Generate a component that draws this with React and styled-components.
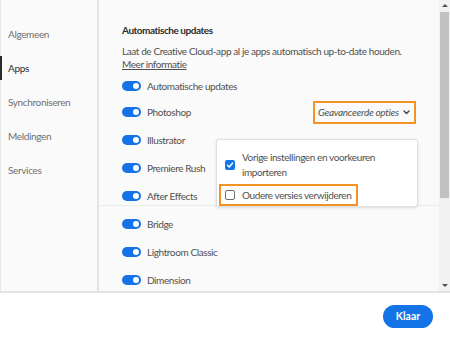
import React from 'react';
import styled, { createGlobalStyle } from 'styled-components';

const GlobalStyle = createGlobalStyle`
    body {
        margin: 0;
        background: #ffffff;
        font-family: Lato, "Open Sans", sans-serif;
    }
`;

const navItems = ['Algemeen', 'Apps', 'Synchroniseren', 'Meldingen', 'Services'];

const apps = [
    { name: 'Automatische updates', first: true },
    { name: 'Photoshop', advanced: true },
    { name: 'Illustrator' },
    { name: 'Premiere Rush' },
    { name: 'After Effects', last: true },
    { name: 'Bridge', afterDivider: true },
    { name: 'Lightroom Classic' },
    { name: 'Dimension' },
];

function Chevron() {
    return (
        <svg width="7" height="5" viewBox="0 0 7 5">
            <path d="M1 1l2.5 2.5L6 1" fill="none" stroke="#4b4b4b" strokeWidth="1.5" strokeLinecap="round" strokeLinejoin="round" />
        </svg>
    );
}

function Check() {
    return (
        <svg width="8" height="8" viewBox="0 0 8 8">
            <path d="M1.5 4.2l1.8 1.8L6.6 2" fill="none" stroke="#ffffff" strokeWidth="1.4" strokeLinecap="round" strokeLinejoin="round" />
        </svg>
    );
}

function App() {
    return (
        <Window>
            <GlobalStyle />
            <Body>
                <Sidebar>
                    {navItems.map((item) => (
                        <NavItem key={item} active={item === 'Apps'}>{item}</NavItem>
                    ))}
                </Sidebar>
                <Main>
                    <Content>
                        <Title>Automatische updates</Title>
                        <Description>
                            Laat de Creative Cloud-app al je apps automatisch up-to-date houden.
                            <br />
                            <MoreLink>Meer informatie</MoreLink>
                        </Description>
                        <List>
                            {apps.map((app) => (
                                <React.Fragment key={app.name}>
                                    {app.afterDivider && <Divider />}
                                    <Row first={app.first} last={app.last}>
                                        <Toggle><Knob /></Toggle>
                                        <Label>{app.name}</Label>
                                        {app.advanced && (
                                            <Advanced>
                                                <span>Geavanceerde opties</span>
                                                <Chevron />
                                            </Advanced>
                                        )}
                                    </Row>
                                </React.Fragment>
                            ))}
                        </List>
                        <Popover>
                            <Option>
                                <Box checked><Check /></Box>
                                <OptionText>Vorige instellingen en voorkeuren<br />importeren</OptionText>
                            </Option>
                            <Option highlighted>
                                <Box />
                                <OptionText>Oudere versies verwijderen</OptionText>
                            </Option>
                        </Popover>
                    </Content>
                    <Scrollbar>
                        <Arrow up />
                        <Track><Thumb /></Track>
                        <Arrow />
                    </Scrollbar>
                </Main>
            </Body>
            <Footer>
                <DoneButton>Klaar</DoneButton>
            </Footer>
        </Window>
    );
}

const Window = styled.div`
    width: 450px;
    height: 338px;
    display: flex;
    flex-direction: column;
    overflow: hidden;
`;

const Body = styled.div`
    height: 291px;
    display: flex;
    background: #fafafa;
    border-bottom: 2px solid #e3e3e3;
`;

const Sidebar = styled.nav`
    width: 96px;
    border-left: 1px solid #e8e8e8;
    border-right: 2px solid #e3e3e3;
    padding-top: 22px;
    display: flex;
    flex-direction: column;
    gap: 10px;
    box-sizing: content-box;
`;

const NavItem = styled.div`
    height: 24px;
    display: flex;
    align-items: center;
    margin-left: -1px;
    padding-left: 8px;
    font-size: 10px;
    letter-spacing: -0.35px;
    color: ${(p) => (p.active ? '#2c2c2c' : '#707070')};
    box-shadow: ${(p) => (p.active ? 'inset 2px 0 0 #2c2c2c' : 'none')};
`;

const Main = styled.div`
    flex: 1;
    display: flex;
`;

const Content = styled.div`
    flex: 1;
    position: relative;
    padding-top: 22px;
`;

const Title = styled.div`
    padding-left: 23px;
    font-size: 10px;
    font-weight: 700;
    letter-spacing: -0.45px;
    line-height: 16px;
    color: #2c2c2c;
`;

const Description = styled.div`
    margin-top: 7px;
    padding-left: 23px;
    font-size: 10px;
    letter-spacing: -0.4px;
    line-height: 13px;
    color: #505050;
`;

const MoreLink = styled.span`
    text-decoration: underline;
`;

const List = styled.div`
    margin-top: 3px;
    display: flex;
    flex-direction: column;
`;

const Row = styled.div`
    height: ${(p) => (p.first ? 24 : p.last ? 23 : 28)}px;
    padding: ${(p) => (p.last ? '4px 0 0' : '0')} 23px;
    box-sizing: border-box;
    display: flex;
    align-items: center;
`;

const Divider = styled.div`
    height: 1px;
    background: #ececec;
    margin-bottom: 4px;
`;

const Toggle = styled.div`
    width: 19px;
    height: 10px;
    border-radius: 5px;
    background: #1473e6;
    display: flex;
    align-items: center;
    justify-content: flex-end;
    padding-right: 2px;
    box-sizing: border-box;
`;

const Knob = styled.div`
    width: 6px;
    height: 6px;
    border-radius: 50%;
    background: #ffffff;
`;

const Label = styled.span`
    margin-left: 6px;
    font-size: 10px;
    letter-spacing: -0.4px;
    color: #505050;
`;

const Advanced = styled.div`
    margin-left: auto;
    height: 23px;
    width: 103px;
    box-sizing: border-box;
    border: 2px solid #f39325;
    display: flex;
    align-items: center;
    justify-content: space-between;
    padding: 0 4px 0 3px;
    font-size: 10px;
    font-style: italic;
    letter-spacing: -0.3px;
    white-space: nowrap;
    color: #505050;
`;

const Popover = styled.div`
    position: absolute;
    left: 117px;
    top: 139px;
    width: 202px;
    height: 68px;
    box-sizing: border-box;
    background: #ffffff;
    border: 1px solid #e1e1e1;
    border-radius: 3px;
    box-shadow: 0 1px 3px rgba(0, 0, 0, 0.12);
    padding: 8px 0 0 2px;
    display: flex;
    flex-direction: column;
    gap: 2px;
`;

const Option = styled.div`
    width: 139px;
    min-height: 22px;
    box-sizing: border-box;
    border: 2px solid ${(p) => (p.highlighted ? '#f39325' : 'transparent')};
    padding-left: 4px;
    display: flex;
    align-items: center;
    gap: 7px;
`;

const Box = styled.div`
    width: 10px;
    height: 10px;
    flex-shrink: 0;
    box-sizing: border-box;
    border-radius: 2px;
    background: ${(p) => (p.checked ? '#1473e6' : '#ffffff')};
    border: ${(p) => (p.checked ? 'none' : '1.5px solid #707070')};
    display: flex;
    align-items: center;
    justify-content: center;
`;

const OptionText = styled.span`
    font-size: 10px;
    letter-spacing: -0.4px;
    line-height: 15px;
    color: #505050;
    white-space: nowrap;
`;

const Scrollbar = styled.div`
    width: 11px;
    background: #f1f1f1;
    display: flex;
    flex-direction: column;
`;

const Arrow = styled.div`
    height: 11px;
    display: flex;
    align-items: center;
    justify-content: center;
    &::after {
        content: '';
        border-left: 3px solid transparent;
        border-right: 3px solid transparent;
        ${(p) => (p.up ? 'border-bottom: 3px solid #505050;' : 'border-top: 3px solid #505050;')}
    }
`;

const Track = styled.div`
    flex: 1;
    padding: 1px 1px 0;
`;

const Thumb = styled.div`
    height: 186px;
    background: #c1c1c1;
`;

const Footer = styled.div`
    flex: 1;
    background: #ffffff;
    display: flex;
    align-items: center;
    justify-content: flex-end;
    padding-right: 17px;
`;

const DoneButton = styled.button`
    width: 50px;
    height: 23px;
    margin-top: 1px;
    border: none;
    border-radius: 12px;
    background: #1473e6;
    color: #ffffff;
    font-family: Lato, sans-serif;
    font-size: 10.5px;
    font-weight: 700;
    padding: 0;
`;

export default App;
